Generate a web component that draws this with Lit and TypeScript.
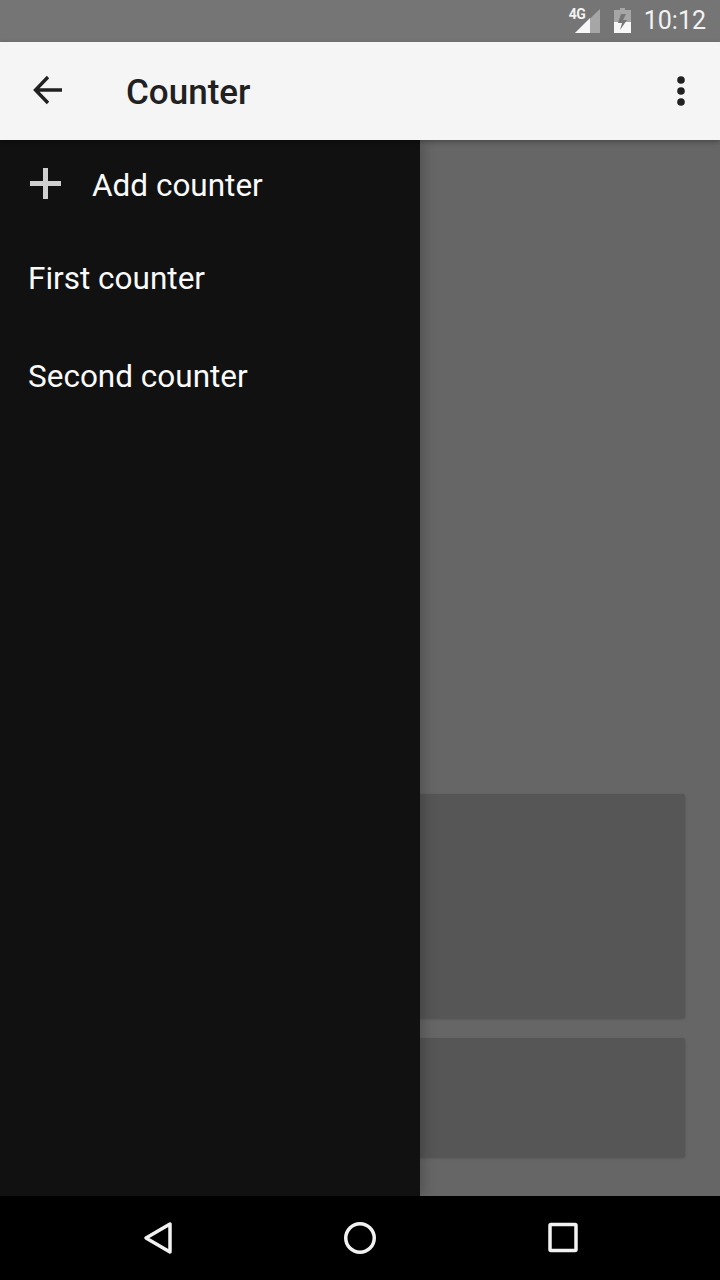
import { LitElement, html, css } from "lit";
import { customElement } from "lit/decorators.js";

@customElement("app-root")
export class AppRoot extends LitElement {
  static styles = css`
    :host {
      display: flex;
      flex-direction: column;
      width: 720px;
      height: 1280px;
      overflow: hidden;
      font-family: Roboto, "Liberation Sans", sans-serif;
    }
    .status {
      height: 42px;
      flex: none;
      background: #757575;
      display: flex;
      align-items: center;
      justify-content: flex-end;
      color: #f2f2f2;
    }
    .status svg { display: block; flex: none; }
    .net { position: relative; width: 34px; height: 42px; margin-right: 11px; }
    .net span {
      position: absolute;
      left: 0;
      top: 7px;
      font-size: 14px;
      font-weight: 700;
      letter-spacing: -0.4px;
      line-height: 14px;
      color: #f2f2f2;
    }
    .net svg { position: absolute; left: 0; top: 0; }
    .batt { margin-right: 13px; }
    .clock { font-size: 25px; line-height: 42px; margin-right: 14px; }
    .bar {
      height: 98px;
      flex: none;
      background: #f5f5f5;
      display: flex;
      align-items: center;
      position: relative;
      z-index: 2;
      box-shadow: 0 2px 5px rgba(0, 0, 0, 0.3);
    }
    .back { margin-left: 33px; margin-bottom: 2px; display: block; flex: none; }
    .title {
      margin-left: 63px;
      flex: 1;
      font-size: 35px;
      font-weight: 500;
      color: #212121;
      line-height: 98px;
      padding-top: 2px;
      box-sizing: border-box;
      height: 98px;
    }
    .more { margin-right: 34px; display: block; flex: none; }
    .body {
      flex: 1;
      position: relative;
      background: #666666;
      display: flex;
      flex-direction: column;
      justify-content: flex-end;
      gap: 20px;
      padding: 0 35px 39px;
      min-height: 0;
    }
    .card {
      background: #565656;
      border-radius: 3px;
      box-shadow: 0 1px 3px rgba(0, 0, 0, 0.22);
    }
    .c1 { height: 224px; }
    .c2 { height: 119px; }
    .drawer {
      position: absolute;
      left: 0;
      top: 0;
      bottom: 0;
      width: 420px;
      background: #111111;
      color: #fafafa;
      box-shadow: 4px 0 12px rgba(0, 0, 0, 0.2);
      font-size: 31.5px;
    }
    .row { display: flex; align-items: center; padding-left: 28px; height: 98px; }
    .add { height: 90px; }
    .add svg { display: block; flex: none; margin-left: 2px; margin-right: 31px; margin-bottom: 3px; }
    .first { height: 96px; }
    .second { padding-top: 2px; box-sizing: border-box; }
    .nav {
      height: 84px;
      flex: none;
      background: #000;
      display: block;
    }
    .nav svg { display: block; }
  `;

  render() {
    return html`
      <div class="status">
        <div class="net">
          <svg width="34" height="42" viewBox="0 0 34 42">
            <path d="M31 9V33H6Z" fill="#a6a6a6" />
            <path d="M21 18V33H6Z" fill="#f7f7f7" />
          </svg>
          <span>4G</span>
        </div>
        <svg class="batt" width="17" height="42" viewBox="0 0 17 42">
          <path d="M6 8h5v2h6v23H0V10h6Z" fill="#a6a6a6" />
          <path d="M0 22H17V33H0Z" fill="#f7f7f7" />
          <path d="M12 14H7L4 23H8L6 30 13 20H9Z" fill="#757575" />
        </svg>
        <div class="clock">10:12</div>
      </div>
      <div class="bar">
        <svg class="back" width="30" height="30" viewBox="0 0 30 30">
          <path d="M29 15H3M15 2 2.500 15 15 28" fill="none" stroke="#212121" stroke-width="3.400" />
        </svg>
        <div class="title">Counter</div>
        <svg class="more" width="10" height="30" viewBox="0 0 10 30">
          <circle cx="5" cy="4" r="3.800" fill="#212121" />
          <circle cx="5" cy="15" r="3.800" fill="#212121" />
          <circle cx="5" cy="26" r="3.800" fill="#212121" />
        </svg>
      </div>
      <div class="body">
        <div class="card c1"></div>
        <div class="card c2"></div>
        <div class="drawer">
          <div class="row add">
            <svg width="31" height="31" viewBox="0 0 31 31">
              <path d="M15.500 0V31M0 15.500H31" fill="none" stroke="#cfcfcf" stroke-width="5" />
            </svg>
            <span>Add counter</span>
          </div>
          <div class="row first">First counter</div>
          <div class="row second">Second counter</div>
        </div>
      </div>
      <div class="nav">
        <svg width="720" height="84" viewBox="0 0 720 84">
          <g fill="none" stroke="#f2f2f2" stroke-width="3.500" stroke-linejoin="round">
            <path d="M170 28V56L146 42Z" />
            <circle cx="360" cy="42" r="14.250" />
            <rect x="550" y="28.500" width="26" height="26" rx="1" />
          </g>
        </svg>
      </div>
    `;
  }
}
